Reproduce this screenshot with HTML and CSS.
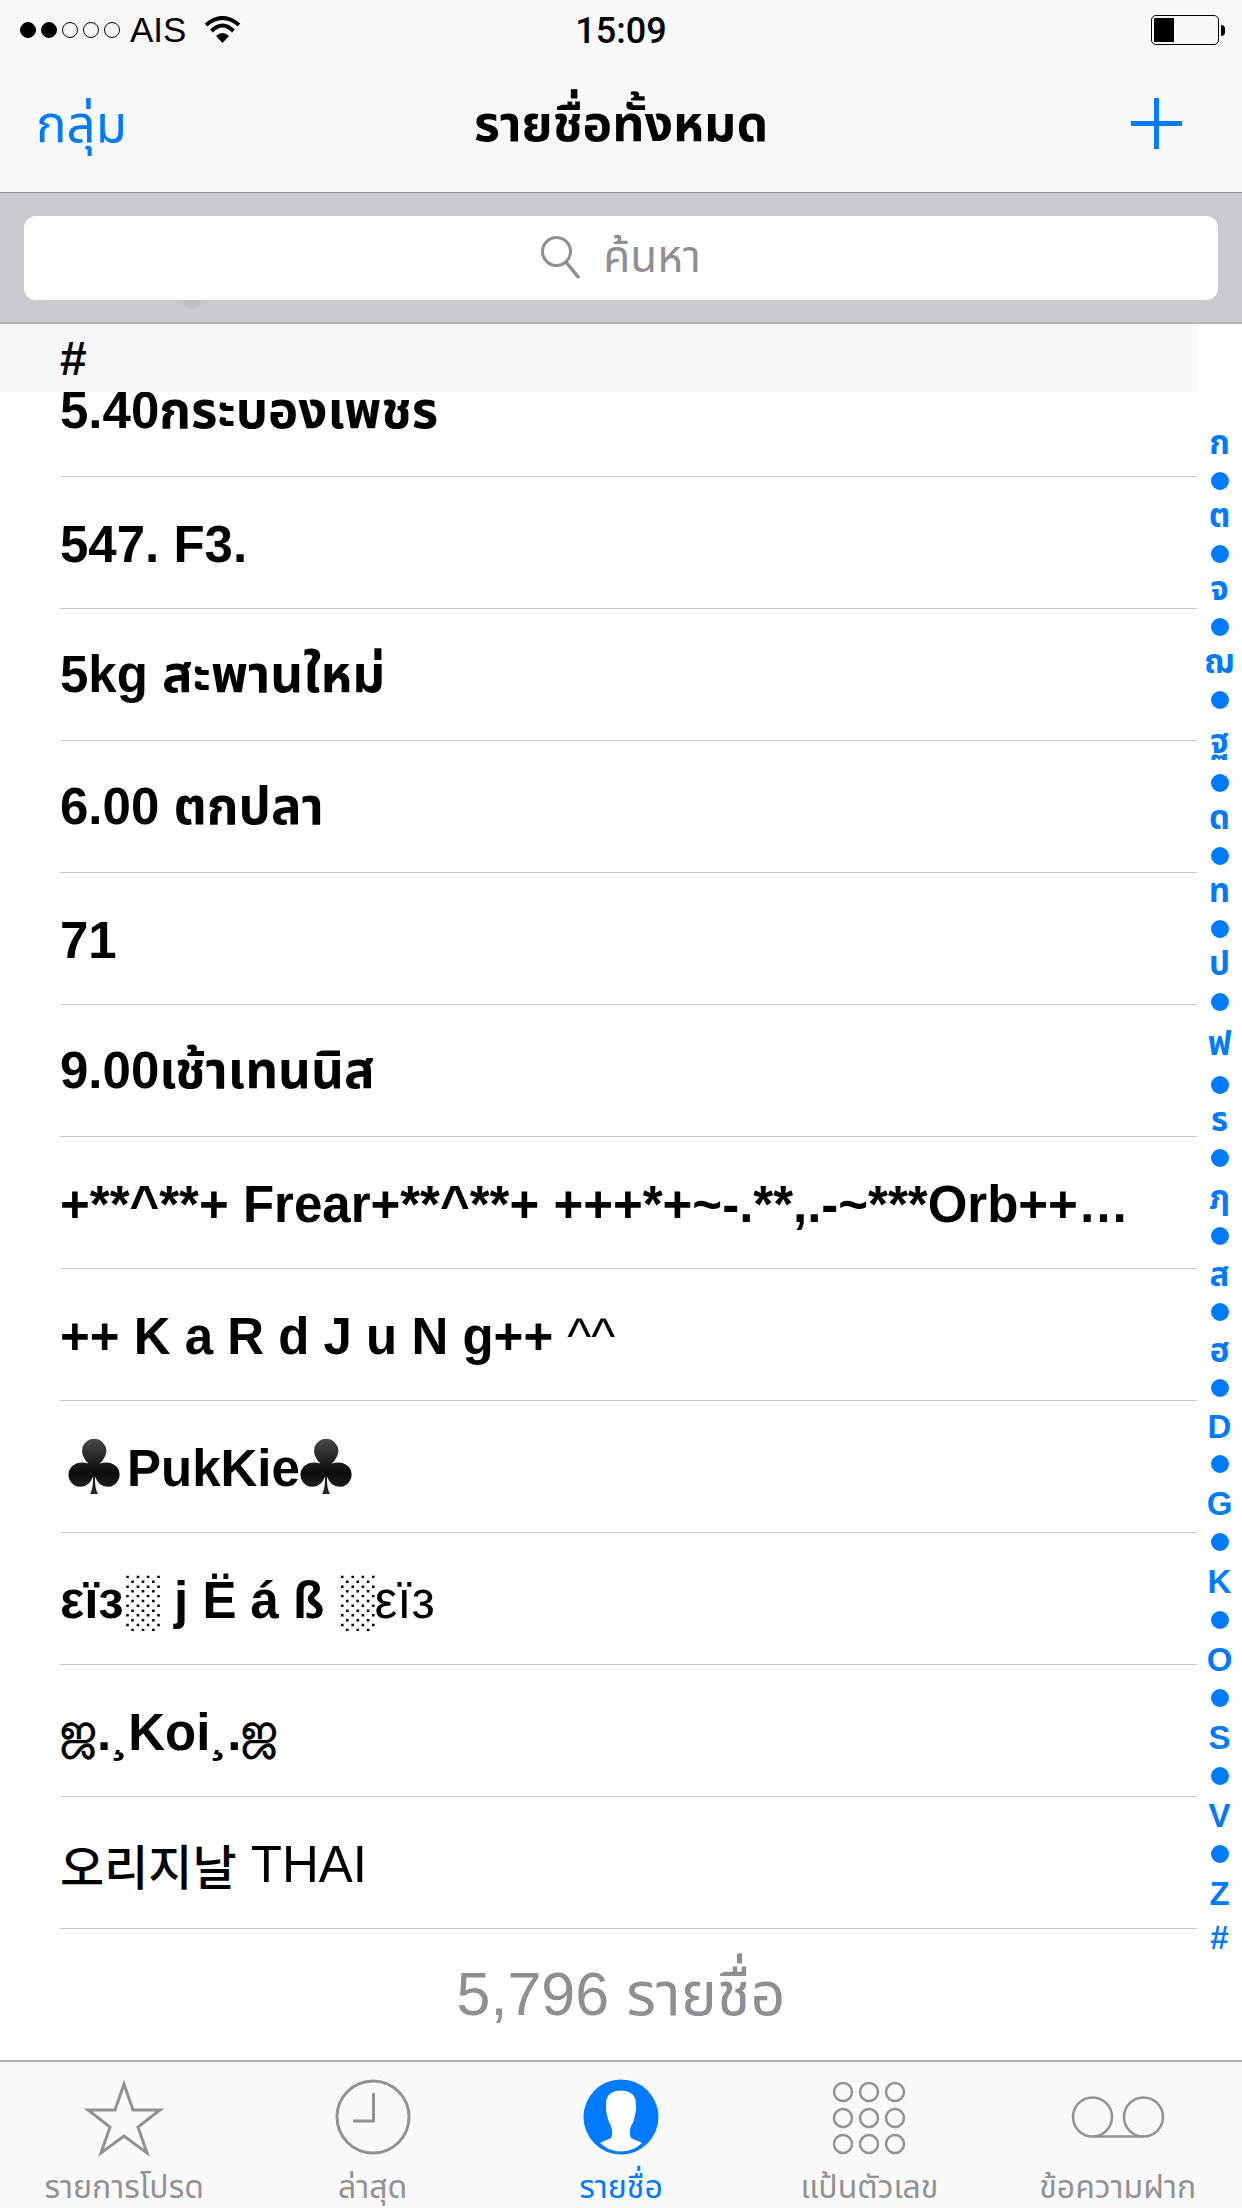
FILE: index.html
```html
<!DOCTYPE html>
<html lang="th">
<head>
    <meta charset="UTF-8">
    <title>รายชื่อทั้งหมด</title>
    <link rel="stylesheet" href="styles.css">
</head>
<body>
    <div class="statusbar">
        <div class="status-left">
            <div class="signal">
                <span class="sig on"></span><span class="sig on"></span><span class="sig"></span><span class="sig"></span><span class="sig"></span>
            </div>
            <span class="carrier">AIS</span>
            <svg class="wifi" width="38" height="28" viewBox="0 0 38 28">
                <path d="M2 9 Q18.5 -5 35 9" fill="none" stroke="#000" stroke-width="4"/>
                <path d="M7.5 15 Q18.5 4 29.5 15" fill="none" stroke="#000" stroke-width="4"/>
                <path d="M12 20 Q18.5 14 25 20 L18.5 27 Z" fill="#000"/>
            </svg>
        </div>
        <div class="time">15:09</div>
        <div class="status-right">
            <div class="battery"><div class="battery-level"></div></div>
            <div class="battery-nub"></div>
        </div>
    </div>

    <header class="navbar">
        <a class="nav-left">กลุ่ม</a>
        <h1 class="nav-title">รายชื่อทั้งหมด</h1>
        <div class="nav-right">
            <svg width="51" height="51" viewBox="0 0 51 51">
                <path d="M25.500 0 V51 M0 25.500 H51" stroke="#007aff" stroke-width="5"/>
            </svg>
        </div>
    </header>

    <div class="searchbar">
        <div class="searchfield">
            <svg width="40" height="46" viewBox="0 0 40 46">
                <circle cx="15.500" cy="16.500" r="14" fill="none" stroke="#8e8e93" stroke-width="3"/>
                <path d="M25 27 L38 43" stroke="#8e8e93" stroke-width="3.500"/>
            </svg>
            <span class="search-text">ค้นหา</span>
        </div>
        <span class="ghost"></span>
    </div>

    <main class="content">
        <div class="list">
            <div class="section-head">#</div>
            <ul class="rows">
                <li>5.40กระบองเพชร</li>
                <li>547. F3.</li>
                <li>5kg สะพานใหม่</li>
                <li>6.00 ตกปลา</li>
                <li>71</li>
                <li>9.00เช้าเทนนิส</li>
                <li>+**^**+ Frear+**^**+ +++*+~-.**,.-~***Orb++…</li>
                <li>++ K a R d J u N g++ <span class="light">^^</span></li>
                <li><span class="club">♣</span>PukKie<span class="club club-end">♣</span></li>
                <li>εïз<span class="light">░</span> j Ë á ß <span class="light">░εïз</span></li>
                <li><span class="tamil">ஜ</span>.¸Koi¸.<span class="tamil">ஜ</span></li>
                <li class="light"><span class="hangul">오리지날</span> THAI</li>
            </ul>
        </div>
        <div class="index">
            <span>ก</span><i></i><span>ต</span><i></i><span>จ</span><i></i><span>ฌ</span><i></i>
            <span class="xl">ฐ</span><i></i><span>ด</span><i></i><span>ท</span><i></i><span>ป</span><i></i>
            <span class="xl">ฟ</span><i></i><span>ร</span><i></i><span class="l">ฦ</span><i></i>
            <span class="m">ส</span><i></i><span class="m">ฮ</span><i></i>
            <span class="m">D</span><i></i><span class="l">G</span><i></i><span class="l">K</span><i></i>
            <span class="l">O</span><i></i><span class="l">S</span><i></i><span class="l">V</span><i></i>
            <span class="l">Z</span><span class="xl">#</span>
        </div>
    </main>

    <div class="count">5,796 รายชื่อ</div>

    <nav class="tabbar">
        <div class="tab">
            <svg width="80" height="80" viewBox="0 0 80 80">
                <path d="M40 4 L49 30 H76 L54 47 L63 73 L40 56 L17 73 L26 47 L4 30 H31 Z" fill="none" stroke="#929292" stroke-width="3"/>
            </svg>
            <span>รายการโปรด</span>
        </div>
        <div class="tab">
            <svg width="80" height="80" viewBox="0 0 80 80">
                <circle cx="40" cy="37" r="36" fill="none" stroke="#929292" stroke-width="3"/>
                <path d="M40.500 13 V41 H20" fill="none" stroke="#929292" stroke-width="3"/>
            </svg>
            <span>ล่าสุด</span>
        </div>
        <div class="tab active">
            <svg width="80" height="80" viewBox="0 0 80 80">
                <circle cx="40" cy="37" r="37.500" fill="#007aff"/>
                <path d="M40 10.500 C32 10.500 25 14 25 24 C25 28 25 32 26 35 C27 40 28 43 30 46 C31 50 32 54 30 58 C27 60 22 61 19 63 Q28 71.500 40 71.500 Q52 71.500 61 63 C58 61 53 60 50 58 C48 54 49 50 50 46 C52 43 53 40 54 35 C55 32 55 28 55 24 C55 14 48 10.500 40 10.500 Z" fill="#fff"/>
            </svg>
            <span>รายชื่อ</span>
        </div>
        <div class="tab">
            <svg width="80" height="80" viewBox="0 0 80 80" fill="none" stroke="#929292" stroke-width="2.500">
                <circle cx="14" cy="12" r="9"/><circle cx="40" cy="12" r="9"/><circle cx="66" cy="12" r="9"/>
                <circle cx="14" cy="38" r="9"/><circle cx="40" cy="38" r="9"/><circle cx="66" cy="38" r="9"/>
                <circle cx="14" cy="64" r="9"/><circle cx="40" cy="64" r="9"/><circle cx="66" cy="64" r="9"/>
            </svg>
            <span>แป้นตัวเลข</span>
        </div>
        <div class="tab">
            <svg width="80" height="80" viewBox="0 0 80 80" fill="none" stroke="#929292" stroke-width="2.500">
                <circle cx="14.500" cy="37" r="19.500"/>
                <circle cx="65.500" cy="37" r="19.500"/>
                <path d="M14.500 56.500 H65.500"/>
            </svg>
            <span>ข้อความฝาก</span>
        </div>
    </nav>
</body>
</html>
```

FILE: styles.css
```css
* {
    box-sizing: border-box;
}
html, body {
    margin: 0;
    padding: 0;
}
body {
    width: 1242px;
    height: 2208px;
    overflow: hidden;
    background-color: #fff;
    color: #000;
    font-family: "Liberation Sans", "Noto Sans Thai", "Noto Sans", "DejaVu Sans", "Noto Sans CJK KR", sans-serif;
}

/* status bar */
.statusbar {
    display: grid;
    grid-template-columns: 1fr auto 1fr;
    align-items: center;
    height: 60px;
    background-color: #f8f8f8;
    font-size: 35px;
}
.status-left {
    display: flex;
    align-items: center;
    padding-left: 20px;
}
.signal {
    display: flex;
    gap: 5px;
}
.sig {
    width: 16px;
    height: 16px;
    border: 1.5px solid #000;
    border-radius: 50%;
}
.sig.on {
    background-color: #000;
}
.carrier {
    margin-left: 10px;
}
.wifi {
    margin-left: 18px;
    margin-top: -1px;
}
.time {
    padding-top: 2px;
    font-family: Roboto, "Liberation Sans", sans-serif;
    font-weight: 500;
    font-size: 36px;
}
.status-right {
    display: flex;
    align-items: center;
    justify-content: flex-end;
    gap: 2px;
    padding-right: 17px;
}
.battery {
    width: 68px;
    height: 30px;
    padding: 2px;
    border: 1.5px solid #000;
    border-radius: 5px;
}
.battery-level {
    width: 20px;
    height: 100%;
    background-color: #000;
}
.battery-nub {
    width: 4px;
    height: 11px;
    background-color: #000;
    border-radius: 0 6px 6px 0;
}

/* nav bar */
.navbar {
    display: grid;
    grid-template-columns: 1fr auto 1fr;
    align-items: center;
    height: 133px;
    padding: 0 36px;
    background-color: #f8f8f8;
    border-bottom: 1px solid #929292;
    font-size: 51px;
}
.nav-left {
    color: #007aff;
}
.nav-title {
    margin: 0;
    font-size: 50px;
    font-weight: bold;
}
.nav-right {
    display: flex;
    justify-content: flex-end;
    margin-right: 24px;
    margin-bottom: 6px;
}

/* search */
.searchbar {
    position: relative;
    height: 131px;
    padding: 23px 24px 0;
    background-color: #c9c9ce;
    border-bottom: 2px solid #b4b4b8;
}
.searchfield {
    position: relative;
    z-index: 1;
    display: flex;
    align-items: center;
    justify-content: center;
    gap: 22px;
    height: 84px;
    background-color: #fff;
    border-radius: 12px;
}
.search-text {
    font-size: 44px;
    color: #8e8e93;
}
.ghost {
    position: absolute;
    left: 183px;
    top: 100px;
    width: 18px;
    height: 16px;
    background-color: #bfbfc4;
    border-radius: 50%;
}

/* list */
.content {
    display: flex;
    height: 1604px;
}
.list {
    width: 1197px;
}
.section-head {
    position: relative;
    z-index: 1;
    height: 68px;
    padding-left: 60px;
    background-color: #f7f7f7;
    font-size: 48px;
    font-weight: bold;
    line-height: 70px;
}
.rows {
    list-style: none;
    margin: -47px 0 0;
    padding: 0 0 0 60px;
}
.rows li {
    display: flex;
    align-items: center;
    height: 132px;
    padding-top: 3px;
    border-bottom: 1.5px solid #c8c7cc;
    font-size: 51px;
    font-weight: bold;
    white-space: pre-wrap;
}
.rows li.light, .light {
    font-weight: normal;
}
.club {
    width: 67px;
    font-family: "DejaVu Sans", sans-serif;
    font-size: 76px;
    line-height: 1;
    text-align: center;
    background: linear-gradient(#5a5a5a, #0c0c0c 55%, #333);
    -webkit-background-clip: text;
    background-clip: text;
    color: transparent;
}
.club-end {
    margin-left: -8px;
}
.tamil {
    font-size: 44px;
}
.hangul {
    font-size: 48px;
    font-weight: 500;
}

/* a-z index */
.index {
    flex: 1;
    display: flex;
    flex-direction: column;
    align-items: center;
    padding: 102px 0 0;
    color: #007aff;
    font-size: 33px;
    font-weight: bold;
}
.index span {
    flex: none;
    display: flex;
    align-items: center;
    height: 37px;
    padding-bottom: 4px;
    line-height: 1;
}
.index span.m {
    height: 40px;
    padding-bottom: 0;
}
.index span.l {
    height: 42px;
    padding-bottom: 0;
}
.index span.xl {
    height: 47px;
    padding-bottom: 0;
}
.index i {
    display: block;
    flex: none;
    width: 18px;
    height: 18px;
    margin: 9px 0;
    border-radius: 50%;
    background-color: #007aff;
}

/* footer count */
.count {
    display: flex;
    align-items: center;
    justify-content: center;
    height: 132px;
    padding-top: 3px;
    font-size: 61px;
    color: #8e8e93;
}

/* tab bar */
.tabbar {
    display: grid;
    grid-template-columns: repeat(5, 1fr);
    height: 148px;
    background-color: #f9f9f9;
    border-top: 2px solid #b2b2b2;
}
.tab {
    display: flex;
    flex-direction: column;
    align-items: center;
    padding-top: 18px;
    color: #929292;
    font-size: 32px;
    line-height: 36px;
}
.tab svg {
    display: block;
    flex: none;
    overflow: visible;
}
.tab span {
    margin-top: 9px;
    white-space: nowrap;
}
.tab.active {
    color: #007aff;
}
```
